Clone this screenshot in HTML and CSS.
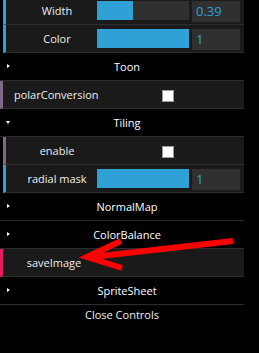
FILE: index.html
```
<!DOCTYPE html>
<html>
<head>
<title>Controls</title>
<meta charset="utf-8">
<link rel="stylesheet" href="styles.css">
</head>
<body>
<div id="gui">
	<div class="folder">
		<div class="row number">
			<span class="name">Width</span>
			<div class="slider"><div class="fg" style="width: 39%"></div></div>
			<div class="num">0.39</div>
		</div>
		<div class="row number">
			<span class="name">Color</span>
			<div class="slider"><div class="fg" style="width: 100%"></div></div>
			<div class="num">1</div>
		</div>
	</div>
	<div class="title closed">Toon</div>
	<div class="row boolean">
		<span class="name">polarConversion</span>
		<span class="check"></span>
	</div>
	<div class="title open">Tiling</div>
	<div class="folder">
		<div class="row boolean">
			<span class="name">enable</span>
			<span class="check"></span>
		</div>
		<div class="row number">
			<span class="name">radial mask</span>
			<div class="slider"><div class="fg" style="width: 100%"></div></div>
			<div class="num">1</div>
		</div>
	</div>
	<div class="title closed">NormalMap</div>
	<div class="title closed">ColorBalance</div>
	<div class="row function">
		<span class="name">saveImage</span>
	</div>
	<div class="title closed">SpriteSheet</div>
	<div class="close">Close Controls</div>
</div>
<svg id="arrow" width="259" height="353" viewBox="0 0 259 353">
	<line x1="233" y1="241" x2="92" y2="257" stroke="#ff0000" stroke-width="6"/>
	<polyline points="121,241 87,257 122,268" fill="none" stroke="#ff0000" stroke-width="6" stroke-linejoin="miter"/>
</svg>
</body>
</html>
```
FILE: styles.css
```
body {
	margin: 0;
	background-color: black;
	font-family: "Open Sans", "Noto Sans", Sans-Serif;
	font-size: 11px;
	overflow: hidden;
}
#gui {
	width: 244px;
	margin-top: -3px;
	color: #eeeeee;
}
.folder {
	padding-left: 3px;
}
.row {
	display: flex;
	align-items: flex-start;
	height: 27px;
	border-bottom: 1px solid #2c2c2c;
	border-left: 3px solid #2fa1d6;
	background-color: #1a1a1a;
}
.row.boolean {
	border-left-color: #806787;
}
.row.function {
	border-left-color: #e61d5f;
}
.name {
	width: 80px;
	padding-left: 11px;
	line-height: 27px;
	text-align: center;
	white-space: nowrap;
}
.slider {
	width: 92px;
	height: 19px;
	margin-top: 4px;
	background-color: #303030;
}
.slider .fg {
	height: 100%;
	background-color: #2fa1d6;
}
.num {
	width: 44px;
	height: 21px;
	margin-top: 4px;
	margin-left: 3px;
	padding-left: 4px;
	background-color: #303030;
	color: #2fa1d6;
	font-size: 13px;
	line-height: 21px;
}
.check {
	width: 10px;
	height: 10px;
	margin-top: 9px;
	margin-left: 68px;
	background-color: white;
	border: 1px solid #9a9a9a;
}
.folder .check {
	margin-left: 65px;
}
.title {
	position: relative;
	height: 27px;
	line-height: 27px;
	padding-left: 10px;
	border-bottom: 1px solid #2c2c2c;
	text-align: center;
	color: white;
}
.title:before {
	content: "";
	position: absolute;
	left: 7px;
	top: 11px;
	border-style: solid;
	border-color: transparent;
}
.title.closed:before {
	border-width: 2.5px 0 2.5px 3px;
	border-left-color: white;
}
.title.open:before {
	left: 6px;
	top: 12px;
	border-width: 3px 2.5px 0 2.5px;
	border-top-color: white;
}
.close {
	height: 20px;
	line-height: 20px;
	text-align: center;
	color: #eeeeee;
}
#arrow {
	position: absolute;
	left: 0;
	top: 0;
}
```
